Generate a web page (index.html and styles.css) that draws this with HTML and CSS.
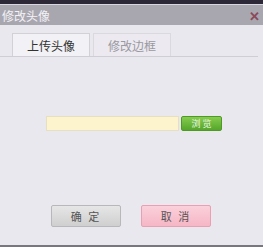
FILE: index.html
```html
<!DOCTYPE html>
<html lang="zh">
<head>
    <meta charset="UTF-8">
    <title>修改头像</title>
    <link rel="stylesheet" href="styles.css">
</head>
<body>
    <div class="topstrip"></div>
    <div class="dialog">
        <div class="titlebar">
            <span class="title">修改头像</span>
            <span class="close">&#x2715;</span>
        </div>
        <div class="tabs">
            <div class="tab active">上传头像</div>
            <div class="tab">修改边框</div>
        </div>
        <div class="upload">
            <div class="file-input"></div>
            <button class="browse">浏 览</button>
        </div>
        <div class="actions">
            <button class="btn ok">确 定</button>
            <button class="btn cancel">取 消</button>
        </div>
    </div>
    <div class="bottomline"></div>
</body>
</html>
```
FILE: styles.css
```css
body {
    margin: 0;
    width: 263px;
    height: 247px;
    overflow: hidden;
    background: #e9e8ee;
    font-family: "Noto Sans CJK SC", "Liberation Sans", sans-serif;
    display: flex;
    flex-direction: column;
}
.topstrip {
    height: 4px;
    background: #2c2838;
    border-bottom: 1px solid #d8d6de;
}
.dialog {
    flex: 1;
    display: flex;
    flex-direction: column;
}
.titlebar {
    height: 20px;
    background: #a8a7b0;
    display: flex;
    align-items: center;
    justify-content: space-between;
    padding: 0 3px 0 2px;
}
.title {
    color: #f4f2f6;
    font-size: 12px;
}
.close {
    color: #8a4a5a;
    font-size: 13px;
    font-weight: bold;
}
.tabs {
    display: flex;
    gap: 3px;
    margin: 8px 5px 0 0;
    padding-left: 12px;
    border-bottom: 1px solid #cfced4;
    height: 23px;
}
.tab {
    width: 76px;
    display: flex;
    align-items: center;
    justify-content: center;
    font-size: 12px;
    color: #9a98a0;
    background: #eceaf0;
    border: 1px solid #dad9de;
    border-bottom: none;
}
.tab.active {
    color: #333;
    background: #f2f1f5;
    border-color: #d2d1d6;
}
.upload {
    display: flex;
    align-items: center;
    gap: 2px;
    margin: 59px 0 0 46px;
}
.file-input {
    width: 133px;
    height: 15px;
    background: #fdf3cd;
    border: 1px solid #e6dfc4;
    box-sizing: border-box;
}
.browse {
    width: 41px;
    height: 15px;
    padding: 0;
    border: 1px solid #4f9a24;
    border-radius: 2px;
    background: linear-gradient(#86cc50, #54a62a);
    color: #eef8e6;
    font-size: 9px;
    font-family: inherit;
    line-height: 13px;
}
.actions {
    display: flex;
    gap: 20px;
    margin: 74px 0 0 51px;
}
.btn {
    width: 70px;
    height: 22px;
    padding: 0;
    font-size: 11px;
    font-family: inherit;
    letter-spacing: 2px;
    color: #555;
    border-radius: 2px;
}
.ok {
    background: linear-gradient(#e6e6e6, #cfcfcf);
    border: 1px solid #b8b8b8;
}
.cancel {
    background: linear-gradient(#fbd0da, #f6b6c6);
    border: 1px solid #e8a0b2;
}
.bottomline {
    height: 2px;
    background: #78777c;
}
```
